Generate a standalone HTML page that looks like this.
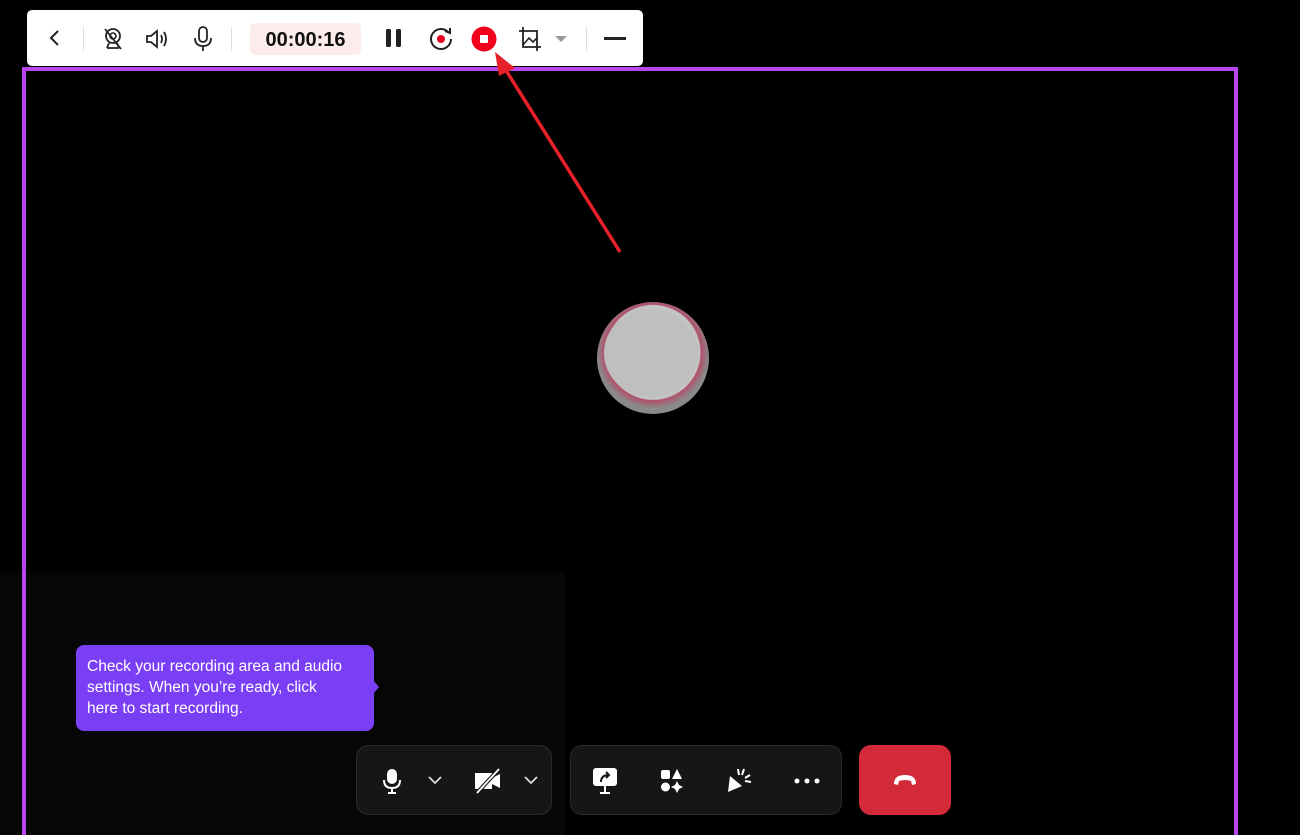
<!DOCTYPE html>
<html><head><meta charset="utf-8"><style>
html,body{margin:0;padding:0;width:1300px;height:835px;background:#000;overflow:hidden;font-family:"Liberation Sans",sans-serif;position:relative}
.abs{position:absolute}
#frame{left:22px;top:67px;width:1208px;height:780px;border:4px solid #b845ee}
#leftpanel{left:0;top:572px;width:565px;height:263px;background:#060606}
#bar{left:27px;top:10px;width:616px;height:56px;background:#fff;border-radius:5px}
.sep{position:absolute;top:17px;width:1px;height:24px;background:#ddd}
#timer{left:223px;top:13px;width:111px;height:32px;background:#fdecec;border-radius:5px;font-weight:bold;font-size:20px;line-height:34px;text-align:center;color:#111}
svg.i{position:absolute}
#tip{left:76px;top:645px;width:298px;height:86px;background:#7a3ff5;border-radius:8px;color:#fff;font-size:15.5px;line-height:21px;padding:11px 22px 0 11px;box-sizing:border-box}
#tip:after{content:"";position:absolute;right:-12px;top:35px;border:7px solid transparent;border-left:6px solid #7a3ff5}
.grp{background:#161618;border:1px solid #2a2a2c;border-radius:12px;box-sizing:border-box}
</style></head><body>
<div class="abs" id="leftpanel"></div>
<div class="abs" id="frame"></div>

<div class="abs" style="left:597px;top:302px;width:112px;height:112px;border-radius:50%;background:radial-gradient(circle at 50% 45%,#c4c4c4 0 47px,#b0506a 48px,#8a8a8a 56px)"></div>
<div class="abs" style="left:604px;top:309px;width:94px;height:88px;border-radius:50%;background:#bfbfbf"></div>

<div class="abs" id="bar">
 <svg class="i" style="left:18px;top:18px" width="20" height="20" viewBox="0 0 20 20"><path d="M13 3L6 10l7 7" fill="none" stroke="#222" stroke-width="2"/></svg>
 <div class="sep" style="left:56px"></div>
 <svg class="i" style="left:74px;top:16px" width="24" height="26" viewBox="0 0 24 26"><circle cx="12" cy="10" r="7" fill="none" stroke="#222" stroke-width="1.8"/><circle cx="12" cy="10" r="3" fill="none" stroke="#222" stroke-width="1.6"/><path d="M6 22h12M8 17l-2 5M16 17l2 5M4 3l16 20" stroke="#222" stroke-width="1.8" fill="none"/></svg>
 <svg class="i" style="left:117px;top:17px" width="26" height="24" viewBox="0 0 26 24"><path d="M3 9h4l6-5v16l-6-5H3z" fill="none" stroke="#222" stroke-width="1.8"/><path d="M17 8q2 4 0 8M20 5q4 7 0 14" fill="none" stroke="#222" stroke-width="1.8"/></svg>
 <svg class="i" style="left:164px;top:15px" width="24" height="28" viewBox="0 0 24 28"><rect x="8" y="2" width="8" height="15" rx="4" fill="none" stroke="#222" stroke-width="1.8"/><path d="M4 13q0 8 8 8t8-8M12 21v5" fill="none" stroke="#222" stroke-width="1.8"/></svg>
 <div class="sep" style="left:204px"></div>
 <div class="abs" id="timer">00:00:16</div>
 <svg class="i" style="left:357px;top:17px" width="20" height="22"><rect x="2" y="2" width="5" height="18" rx="1.5" fill="#222"/><rect x="12" y="2" width="5" height="18" rx="1.5" fill="#222"/></svg>
 <svg class="i" style="left:400px;top:15px" width="28" height="28" viewBox="0 0 28 28"><path d="M22 8A10 10 0 1 0 24 14" fill="none" stroke="#222" stroke-width="2"/><path d="M18 6l5 2 0-5" fill="none" stroke="#222" stroke-width="2"/><circle cx="14" cy="14" r="4" fill="#e8001c"/></svg>
 <svg class="i" style="left:444px;top:16px" width="26" height="26"><circle cx="13" cy="13" r="12.5" fill="#f0001a"/><rect x="9" y="9" width="8" height="8" rx="1" fill="#fff"/></svg>
 <svg class="i" style="left:490px;top:15px" width="26" height="28" viewBox="0 0 26 28"><path d="M6 2v20h18M2 6h18v20" fill="none" stroke="#222" stroke-width="1.8"/><path d="M6 20l6-7 4 4 4-4" fill="none" stroke="#222" stroke-width="1.6"/></svg>
 <svg class="i" style="left:527px;top:25px" width="14" height="8"><path d="M1 1h12L7 7z" fill="#999"/></svg>
 <div class="sep" style="left:559px"></div>
 <div class="abs" style="left:577px;top:27px;width:22px;height:2.5px;background:#222"></div>
</div>

<svg class="abs" style="left:490px;top:50px" width="140" height="210"><line x1="130" y1="202" x2="12" y2="14" stroke="#e8202a" stroke-width="3.5"/><path d="M5 2l20 16-16 8z" fill="#e8202a"/></svg>

<div class="abs" id="tip">Check your recording area and audio settings. When you’re ready, click here to start recording.</div>

<div class="abs grp" style="left:356px;top:745px;width:196px;height:70px">
 <svg class="i" style="left:25px;top:22px" width="20" height="26" viewBox="0 0 20 26"><rect x="5" y="1" width="10" height="15" rx="5" fill="#fff"/><path d="M2 12q0 8 8 8t8-8M10 20v5M6 25h8" fill="none" stroke="#fff" stroke-width="2"/></svg>
 <svg class="i" style="left:70px;top:29px" width="16" height="10"><path d="M2 2l6 6 6-6" fill="none" stroke="#ddd" stroke-width="1.8"/></svg>
 <svg class="i" style="left:116px;top:21px" width="30" height="28" viewBox="0 0 30 28"><path d="M2 6h17v16H2zM19 11l8-4v14l-8-4" fill="#fff"/><path d="M4 26L26 2" stroke="#161618" stroke-width="4"/><path d="M4 26L26 2" stroke="#fff" stroke-width="1.8"/></svg>
 <svg class="i" style="left:166px;top:29px" width="16" height="10"><path d="M2 2l6 6 6-6" fill="none" stroke="#ddd" stroke-width="1.8"/></svg>
</div>

<div class="abs grp" style="left:570px;top:745px;width:272px;height:70px">
 <svg class="i" style="left:21px;top:20px" width="26" height="30" viewBox="0 0 26 30"><rect x="1" y="2" width="24" height="18" rx="3" fill="#fff"/><path d="M9 16q0-7 8-7M14 6l3 3-3 3" fill="none" stroke="#161618" stroke-width="2"/><path d="M13 20v6M8 27h10" stroke="#fff" stroke-width="2"/></svg>
 <svg class="i" style="left:88px;top:22px" width="26" height="26"><rect x="2" y="2" width="9" height="9" rx="2" fill="#fff"/><path d="M18 1l5 10h-10z" fill="#fff"/><circle cx="6.5" cy="19" r="4.5" fill="#fff"/><path d="M18 13l2 4 4 2-4 2-2 4-2-4-4-2 4-2z" fill="#fff"/></svg>
 <svg class="i" style="left:155px;top:20px" width="28" height="30" viewBox="0 0 28 30"><path d="M4 10l12 10-14 6z" fill="#fff"/><path d="M12 3l1 6M18 3l-2 6M24 9l-5 3M25 16l-6-1" stroke="#fff" stroke-width="2"/></svg>
 <svg class="i" style="left:223px;top:32px" width="26" height="6"><circle cx="3" cy="3" r="2.5" fill="#fff"/><circle cx="13" cy="3" r="2.5" fill="#fff"/><circle cx="23" cy="3" r="2.5" fill="#fff"/></svg>
</div>

<div class="abs" style="left:859px;top:745px;width:92px;height:70px;background:#d32a3a;border-radius:12px">
 <svg class="i" style="left:33px;top:28px" width="26" height="14"><path d="M2 11q0-9 11-9t11 9l-4 1-1-4q-6-2-12 0l-1 4z" fill="#fff"/></svg>
</div>
</body></html>
